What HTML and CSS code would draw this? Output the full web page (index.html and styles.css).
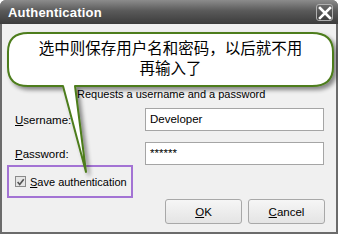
FILE: index.html
```html
<!DOCTYPE html>
<html>
<head>
<meta charset="utf-8">
<link rel="stylesheet" href="styles.css">
</head>
<body>
<div class="window">
  <div class="titlebar">
    <span class="title">Authentication</span>
    <span class="close">
      <svg width="14" height="14" viewBox="0 0 14 14"><path d="M2 2 L12 12 M12 2 L2 12" stroke="#fff" stroke-width="2.6" stroke-linecap="square"/></svg>
    </span>
  </div>
  <div class="body">
    <div class="intro">Requests a username and a password</div>
    <div class="row">
      <label class="label"><u>U</u>sername:</label>
      <div class="input">Developer</div>
    </div>
    <div class="row">
      <label class="label"><u>P</u>assword:</label>
      <div class="input">******</div>
    </div>
    <div class="savebox">
      <span class="check">
        <svg width="11" height="11" viewBox="0 0 11 11"><path d="M2 5 L4.5 8 L9.5 1.5" fill="none" stroke="#555" stroke-width="2"/></svg>
      </span>
      <span class="savelabel"><u>S</u>ave authentication</span>
    </div>
    <div class="buttons">
      <div class="btn"><u>O</u>K</div>
      <div class="btn"><u>C</u>ancel</div>
    </div>
  </div>
  <svg class="callout" width="338" height="180" viewBox="0 0 338 180">
    <defs>
      <filter id="sh" x="-10%" y="-10%" width="130%" height="140%">
        <feGaussianBlur in="SourceAlpha" stdDeviation="2"/>
        <feOffset dx="3" dy="3" result="b"/>
        <feComponentTransfer><feFuncA type="linear" slope="0.45"/></feComponentTransfer>
        <feMerge><feMergeNode/><feMergeNode in="SourceGraphic"/></feMerge>
      </filter>
    </defs>
    <path filter="url(#sh)" d="M28 33 L312 33 Q333 33 333 52 L333 67 Q333 86 312 86 L75 86 L86 172 L63 86 L28 86 Q8 86 8 67 L8 52 Q8 33 28 33 Z" fill="#fff" stroke="#4d7d1c" stroke-width="2" stroke-linejoin="round"/>
  </svg>
  <div class="callout-text">
    <div class="cline">选中则保存用户名和密码，以后就不用</div>
    <div class="cline">再输入了</div>
  </div>
</div>
</body>
</html>
```
FILE: styles.css
```css
html, body { margin: 0; padding: 0; }
body { width: 338px; height: 234px; overflow: hidden; background: #fff; font-family: "Liberation Sans", sans-serif; }
.window { position: relative; width: 338px; height: 234px; box-sizing: border-box; background: #6b6b6b; border-radius: 6px 6px 0 0; overflow: hidden; display: flex; flex-direction: column; }
.titlebar { height: 24px; flex: none; display: flex; align-items: center; justify-content: space-between; padding: 0 5px 0 8px; background: linear-gradient(#8c8c8c, #5a5a5a 45%, #3c3c3c); }
.title { color: #fff; font-family: "Liberation Sans", sans-serif; font-weight: bold; font-size: 13px; letter-spacing: 0.2px; }
.close { width: 17px; height: 17px; box-sizing: border-box; border: 1px solid #b0b0b0; border-radius: 3px; background: linear-gradient(#6a6a6a, #3e3e3e); display: flex; align-items: center; justify-content: center; margin-top: 1px; }
.body { flex: 1; margin: 0 2px 2px 2px; background: #f0f0f0; position: relative; font-family: "Liberation Sans", sans-serif; font-size: 11px; color: #000; padding: 0 12px 0 13px; }
.intro { margin: 63px 0 0 62px; height: 14px; line-height: 14px; }
.row { display: flex; align-items: center; justify-content: space-between; height: 23px; margin-top: 7px; }
.row + .row { margin-top: 11px; }
.label { font-size: 11.5px; }
.input { width: 179px; height: 23px; box-sizing: border-box; border: 1px solid #a5a5a5; background: #fff; padding: 0 4px; line-height: 21px; font-size: 11.5px; }
.savebox { position: absolute; left: 5px; top: 141px; width: 126px; height: 33px; box-sizing: border-box; border: 2px solid #a373d4; display: flex; align-items: center; padding-left: 6px; gap: 4px; }
.check { flex: none; width: 11px; height: 11px; box-sizing: border-box; border: 1px solid #8a8a8a; background: #e6e6e6; display: flex; }
.savelabel { font-size: 11px; white-space: nowrap; }
.buttons { position: absolute; right: 11px; bottom: 8px; display: flex; gap: 6px; }
.btn { width: 77px; height: 25px; box-sizing: border-box; border: 1px solid #a8a8a8; border-radius: 3px; background: linear-gradient(#f6f6f6, #e4e4e4); display: flex; align-items: center; justify-content: center; font-size: 11.5px; }
.callout { position: absolute; left: 0; top: 0; }
.callout-text { position: absolute; left: 8px; top: 37px; width: 325px; text-align: center; font-family: "Noto Sans CJK SC", sans-serif; font-size: 15.5px; color: #000; }
.cline { height: 20px; line-height: 20px; white-space: nowrap; }
```
